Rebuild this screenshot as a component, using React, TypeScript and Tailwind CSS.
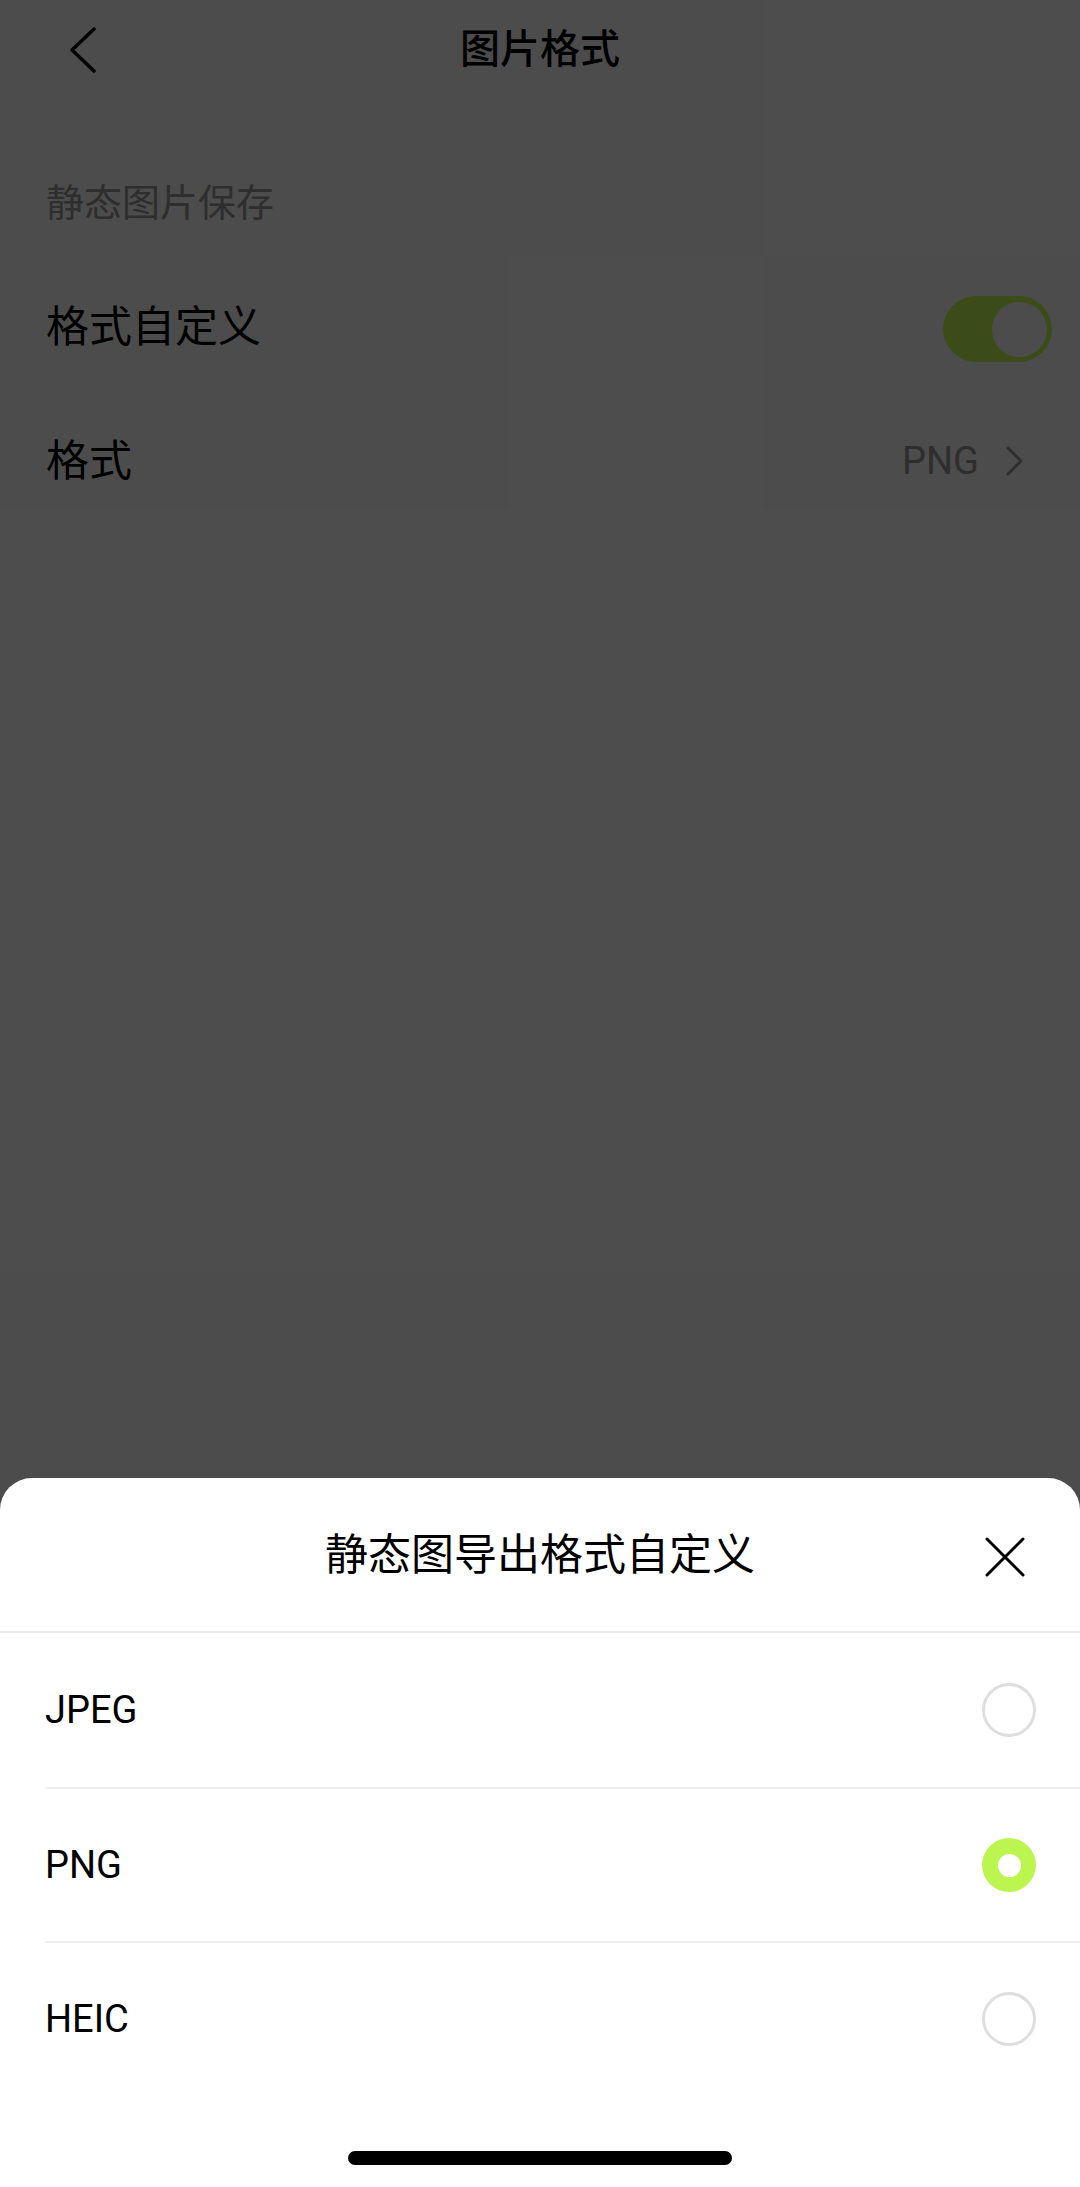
import React from "react";

const FONT = { fontFamily: "Roboto, 'Noto Sans CJK SC', sans-serif" };

function Chevron({ dir, className, color }: { dir: "left" | "right"; className?: string; color: string }) {
  return dir === "left" ? (
    <svg viewBox="0 0 28 46" className={className} fill="none">
      <polyline points="25,2 3,23 25,44" stroke={color} strokeWidth="3.5" strokeLinecap="round" strokeLinejoin="round" />
    </svg>
  ) : (
    <svg viewBox="0 0 18 30" className={className} fill="none">
      <polyline points="2,2 15,15 2,28" stroke={color} strokeWidth="3" strokeLinecap="round" strokeLinejoin="round" />
    </svg>
  );
}

function Radio({ checked }: { checked: boolean }) {
  return checked ? (
    <div className="w-[54px] h-[54px] rounded-full bg-[#bdf550] flex items-center justify-center">
      <div className="w-[23px] h-[23px] rounded-full bg-white" />
    </div>
  ) : (
    <div className="w-[54px] h-[54px] rounded-full border-[3px] border-[#dedede] bg-white" />
  );
}

export default function App() {
  const options = [
    { label: "JPEG", checked: false },
    { label: "PNG", checked: true },
    { label: "HEIC", checked: false },
  ];
  return (
    <div className="relative w-[1080px] h-[2187px] bg-white overflow-hidden" style={FONT}>
      {/* underlying page */}
      <div className="grid grid-cols-[1fr_auto_1fr] items-center h-[100px]">
        <div className="pl-[69px] flex items-center">
          <Chevron dir="left" color="#000" className="w-[28px] h-[46px]" />
        </div>
        <div className="text-[40px] leading-[48px] font-medium text-black">图片格式</div>
        <div />
      </div>
      <div className="mt-[80px] px-[46px] h-[46px] text-[38px] leading-[46px] text-[#999999]">静态图片保存</div>
      <div className="mt-[34px] h-[134px] flex items-center justify-between pl-[46px] pr-[28px]">
        <div className="text-[43px] leading-[52px] text-black">格式自定义</div>
        <div className="w-[109px] h-[66px] rounded-full bg-[#c8ff55] flex items-center justify-end pr-[5px] mt-[4px]">
          <div className="w-[55px] h-[55px] rounded-full bg-white" />
        </div>
      </div>
      <div className="h-[134px] flex items-center justify-between pl-[46px] pr-[56px]">
        <div className="text-[43px] leading-[52px] text-black">格式</div>
        <div className="flex items-center gap-[27px]">
          <span className="text-[38px] leading-[46px] text-[#999999]">PNG</span>
          <Chevron dir="right" color="#999999" className="w-[18px] h-[30px]" />
        </div>
      </div>

      {/* dim overlay */}
      <div className="absolute inset-0 bg-black/70" />

      {/* bottom sheet */}
      <div className="absolute left-0 right-0 bottom-0 bg-white rounded-t-[32px]">
        <div className="relative h-[155px] border-b-2 border-[#ececec] flex items-center justify-center">
          <div className="text-[43px] leading-[52px] text-black">静态图导出格式自定义</div>
          <svg viewBox="0 0 40 40" className="absolute right-[55px] top-[59px] w-[40px] h-[40px]" fill="none">
            <line x1="2" y1="2" x2="38" y2="38" stroke="#000" strokeWidth="3" strokeLinecap="round" />
            <line x1="38" y1="2" x2="2" y2="38" stroke="#000" strokeWidth="3" strokeLinecap="round" />
          </svg>
        </div>
        {options.map((o, i) => (
          <div
            key={o.label}
            className={`ml-[45px] h-[154px] flex items-center justify-between pr-[44px] ${i > 0 ? "border-t-2 border-[#efefef]" : ""}`}
          >
            <span className="text-[38px] leading-[46px] text-black">{o.label}</span>
            <Radio checked={o.checked} />
          </div>
        ))}
        <div className="pt-[56px] pb-[22px] flex justify-center">
          <div className="w-[384px] h-[14px] rounded-full bg-black" />
        </div>
      </div>
    </div>
  );
}
